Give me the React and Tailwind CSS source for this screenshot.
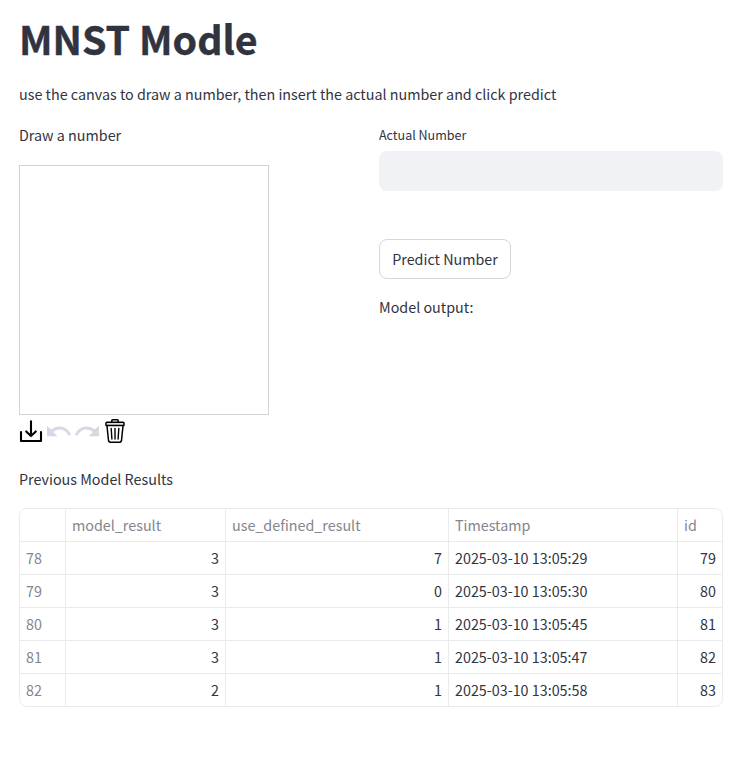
const rows = [
  [78, 3, 7, '2025-03-10 13:05:29', 79],
  [79, 3, 0, '2025-03-10 13:05:30', 80],
  [80, 3, 1, '2025-03-10 13:05:45', 81],
  [81, 3, 1, '2025-03-10 13:05:47', 82],
  [82, 2, 1, '2025-03-10 13:05:58', 83],
];

function DownloadIcon() {
  return (
    <svg className="h-6 w-6" viewBox="0 0 24 24" fill="none" stroke="#000" strokeWidth="2.1" strokeLinecap="round" strokeLinejoin="round">
      <path d="M2 13v9h20v-9M12 2.200v14.800M7.200 12.400 12 17.100l4.800-4.700" />
    </svg>
  );
}

function UndoIcon({ flip }) {
  return (
    <svg className={flip ? 'h-6 w-6 -scale-x-100' : 'h-6 w-6'} viewBox="0 0 24 24" fill="#d5d8e5">
      <path d="M0 6.800v10.400h10.400L6.200 13c1.800-1.600 4.100-2.500 6.500-2.500 4.100 0 7.500 2.600 8.700 6.200L24 15.900C22.500 11.200 18 7.400 12.700 7.400c-3.200 0-6.200 1.200-8.400 3.200L0 6.800z" />
    </svg>
  );
}

function TrashIcon() {
  return (
    <svg className="h-6 w-6" viewBox="0 0 24 24" fill="none" stroke="#000" strokeWidth="1.5" strokeLinecap="round" strokeLinejoin="round">
      <path d="M4 7 5.500 21.500Q5.800 23.200 7.400 23.200h9.200Q18.200 23.200 18.500 21.500L20 7" />
      <path fill="#ddd" d="M3.900 3.200h16.200q.9 0 .9.900v2.400H3V4.100q0-.9.900-.9z" />
      <path d="M8.800 3V1.600q0-.8.800-.8h4.800q.8 0 .8.800V3" />
      <path strokeWidth="1.400" d="M8.200 9.500l.7 10.500M12 9.500V20M15.800 9.500 15.100 20" />
    </svg>
  );
}

export default function App() {
  return (
    <main className="h-[760px] w-[744px] overflow-hidden bg-white pl-[19px] pr-[21px] pt-[14px] font-['Noto_Sans_CJK_SC',sans-serif] text-[14.34px] leading-6 text-[#31333f]">
      <h1 className="h-[68px] text-[39.3px] font-bold leading-[48px] [-webkit-text-stroke:0.4px_#31333f]">MNST Modle</h1>
      <p className="h-[41px]">use the canvas to draw a number, then insert the actual number and click predict</p>
      <div className="grid h-[344px] grid-cols-2 gap-4">
        <section>
          <p className="h-[42px]">Draw a number</p>
          <div className="h-[250px] w-[250px] border border-[#d3d3d3]" />
          <div className="flex gap-1 pt-1">
            <DownloadIcon />
            <UndoIcon />
            <UndoIcon flip />
            <TrashIcon />
          </div>
        </section>
        <section>
          <label htmlFor="actual" className="block h-[28px] text-[12.53px]">Actual Number</label>
          <input id="actual" className="block h-10 w-full rounded-lg bg-[#f0f2f6] px-3 outline-none" />
          <button className="mt-12 flex h-10 w-[132px] items-center justify-center rounded-lg border border-[#d6d6d9]">Predict Number</button>
          <p className="mt-4">Model output:</p>
        </section>
      </div>
      <p className="h-[41px]">Previous Model Results</p>
      <div className="h-[199px] overflow-hidden rounded-lg border border-[#e9eaeb]">
        <table className="w-full table-fixed border-separate border-spacing-0">
          <colgroup>
            <col className="w-[46px]" />
            <col className="w-[160px]" />
            <col className="w-[223px]" />
            <col className="w-[229px]" />
            <col className="w-[44px]" />
          </colgroup>
          <thead>
            <tr className="h-[33px] text-left text-[#84858c]">
              <th className="border-b border-r border-[#e9eaeb] p-0" />
              <th className="border-b border-r border-[#e9eaeb] p-0 pl-1.5 font-normal">model_result</th>
              <th className="border-b border-r border-[#e9eaeb] p-0 pl-1.5 font-normal">use_defined_result</th>
              <th className="border-b border-r border-[#e9eaeb] p-0 pl-1.5 font-normal">Timestamp</th>
              <th className="border-b border-[#e9eaeb] p-0 pl-1.5 font-normal">id</th>
            </tr>
          </thead>
          <tbody>
            {rows.map(([index, result, defined, time, id]) => (
              <tr key={index} className="h-[33px]">
                <td className="border-b border-r border-[#e9eaeb] p-0 pl-1.5 text-[#84858c]">{index}</td>
                <td className="border-b border-r border-[#e9eaeb] p-0 pr-1.5 text-right">{result}</td>
                <td className="border-b border-r border-[#e9eaeb] p-0 pr-1.5 text-right">{defined}</td>
                <td className="border-b border-r border-[#e9eaeb] p-0 pl-1.5">{time}</td>
                <td className="border-b border-[#e9eaeb] p-0 pr-1.5 text-right">{id}</td>
              </tr>
            ))}
          </tbody>
        </table>
      </div>
    </main>
  );
}
